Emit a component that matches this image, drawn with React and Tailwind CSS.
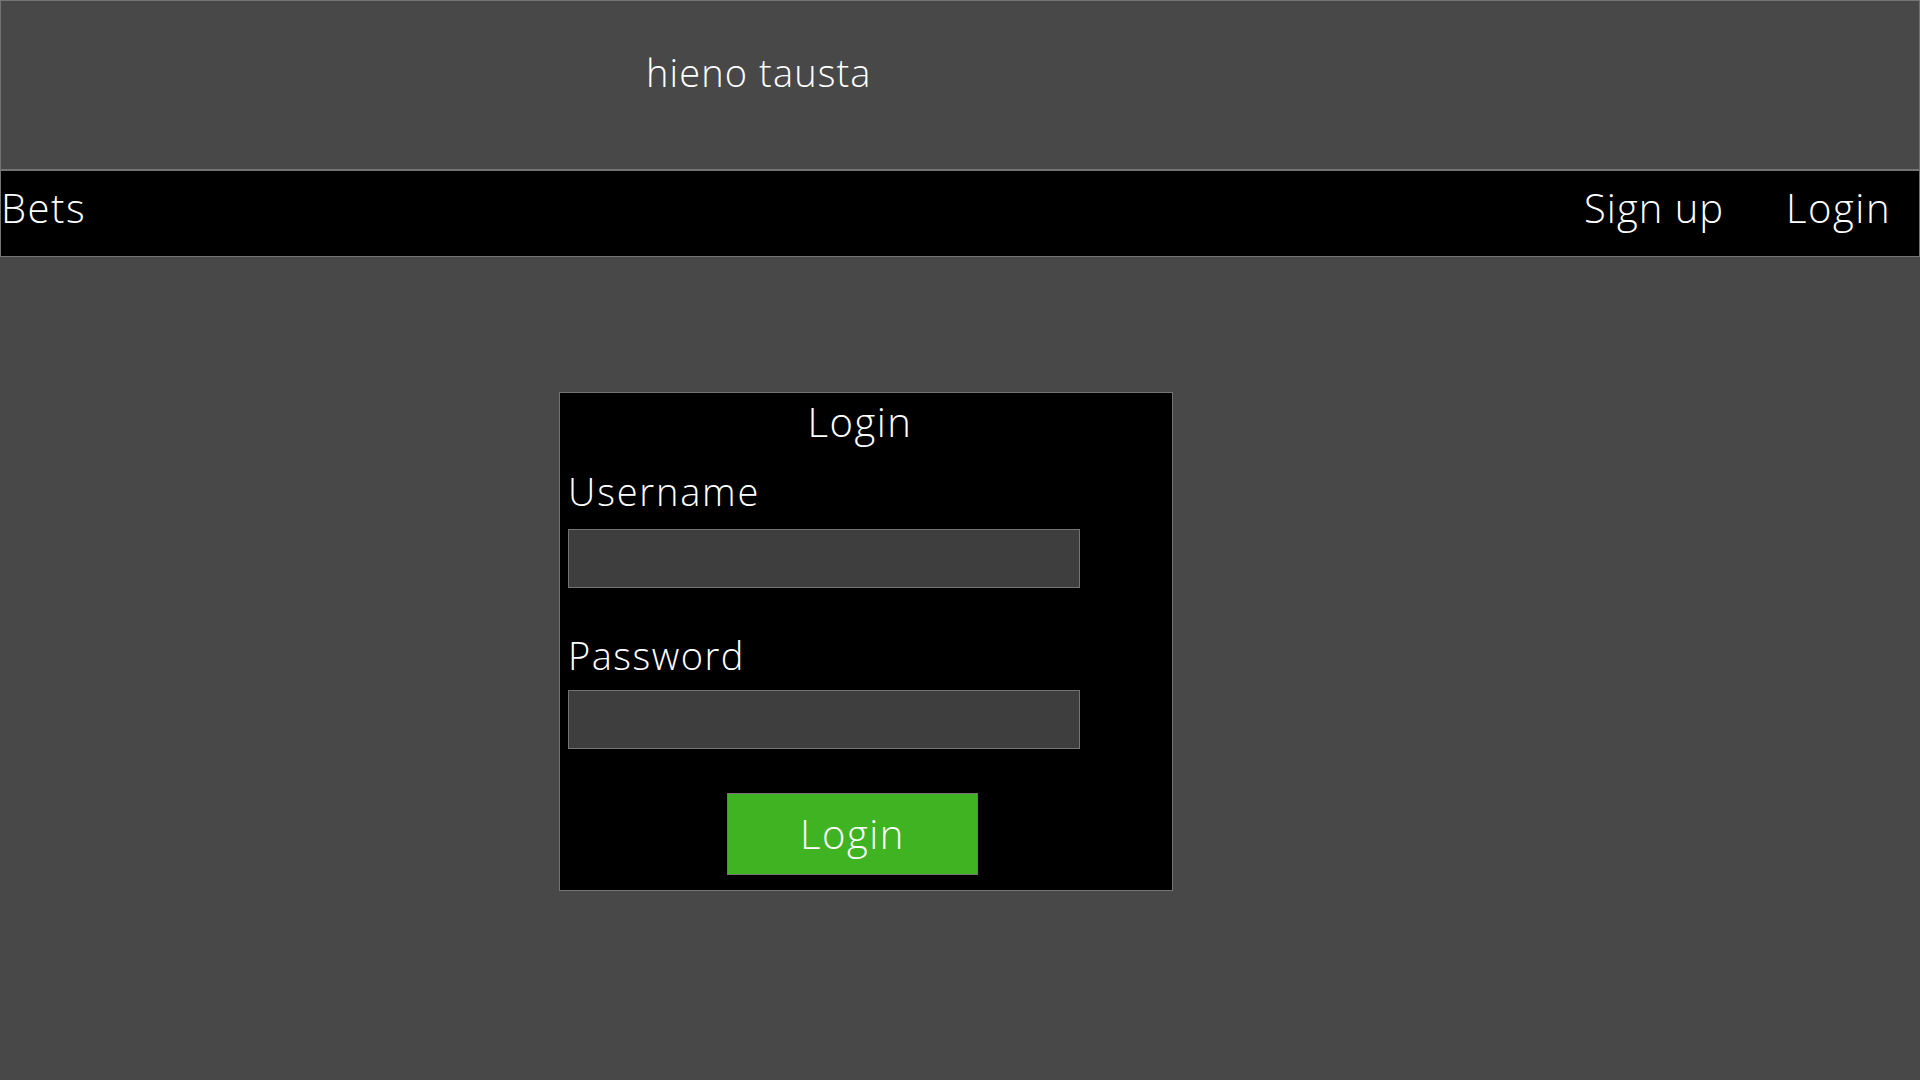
import React from "react";

function App() {
  return (
    <div
      className="w-full min-h-screen bg-[#484848] text-white font-light tracking-[1.5px]"
      style={{ fontFamily: "'Open Sans', Lato, sans-serif" }}
    >
      {/* top banner */}
      <header className="h-[170px] border border-[#747474] bg-[#484848]">
        <h2 className="pl-[645px] pt-[48px] text-[38px] leading-[46px] font-light tracking-[1.1px]">
          hieno tausta
        </h2>
      </header>

      <nav className="h-[87px] border border-[#747474] bg-black flex items-start pt-[13px]">
        <a className="text-[40px] leading-[48px]">Bets</a>
        <div className="ml-auto flex gap-[62px] pr-[28px]">
          <a className="text-[40px] leading-[48px] tracking-[1px]">Sign up</a>
          <a className="text-[40px] leading-[48px]">Login</a>
        </div>
      </nav>

      <main className="pt-[135px] pl-[559px]">
        <form
          className="w-[614px] h-[499px] border border-[#747474] bg-black px-[8px] pt-[5px]"
          onSubmit={(e) => e.preventDefault()}
        >
          <h1 className="text-center pr-[12px] text-[40px] leading-[48px] font-light">Login</h1>
          <label className="block mt-[22px] text-[38px] leading-[46px] tracking-[1.8px]">Username</label>
          <input
            className="block mt-[15px] w-[512px] h-[59px] bg-[#3e3e3e] border border-[#747474] outline-none"
            type="text"
          />
          <label className="block mt-[44px] text-[38px] leading-[46px]">Password</label>
          <input
            className="block mt-[12px] w-[512px] h-[59px] bg-[#3e3e3e] border border-[#747474] outline-none"
            type="password"
          />
          <div className="flex pl-[159px]">
            <button
              type="submit"
              className="mt-[44px] w-[251px] h-[82px] bg-[#40b322] border border-[#747474] text-[40px] leading-[48px] font-light text-white"
            >
              Login
            </button>
          </div>
        </form>
      </main>
    </div>
  );
}

export default App;
